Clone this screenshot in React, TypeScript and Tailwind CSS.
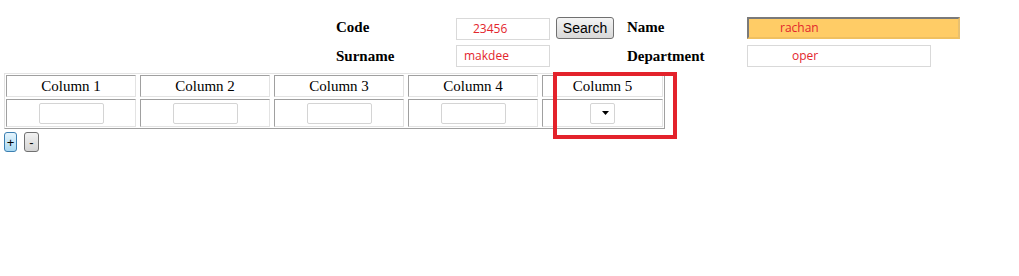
import React from "react";

const columns = ["Column 1", "Column 2", "Column 3", "Column 4"];

const FieldInput = (props: { value: string; className: string }) => {
    const { value, className } = props;

    return (
        <div
            className={`flex h-[22px] items-center border border-[#d9d9d9] text-[12px] text-[#e3262d] ${className}`}
            style={{ fontFamily: '"Open Sans", "Noto Sans", sans-serif' }}
        >
            {value}
        </div>
    );
};

const Label = (props: { text: string; className?: string }) => (
    <div
        className={`flex w-[120px] items-center text-[15px] font-bold text-black ${props.className ?? ""}`}
        style={{ fontFamily: '"Liberation Serif", serif' }}
    >
        {props.text}
    </div>
);

const Cell = (props: { children: React.ReactNode; width: string; height: string }) => (
    <div
        className={`flex items-center justify-center border border-t-[#a0a0a0] border-l-[#a0a0a0] border-r-[#e3e3e3] border-b-[#e3e3e3] ${props.width} ${props.height}`}
    >
        {props.children}
    </div>
);

export default function App() {
    return (
        <div className="relative h-[276px] w-[1019px] bg-white">
            {/* search form */}
            <div className="flex flex-col gap-[6px] pl-[336px] pt-[16px]">
                <div className="flex h-[23px] items-center">
                    <Label text="Code" />
                    <FieldInput value="23456" className="mt-[2px] w-[94px] pl-[16px]" />
                    <button
                        className="ml-[6px] h-[22px] w-[58px] rounded-[3px] border border-[#707070] bg-gradient-to-b from-[#f4f4f4] to-[#d8d8d8] text-[14px] leading-none text-black"
                        style={{ fontFamily: '"Liberation Sans", Arial, sans-serif' }}
                    >
                        Search
                    </button>
                    <Label text="Name" className="ml-[13px]" />
                    <FieldInput
                        value="rachan"
                        className="h-[21px] w-[213px] border-2 border-t-[#7a7a7a] border-l-[#7a7a7a] border-r-[#e8c070] border-b-[#f0c060] bg-[#ffcc66] pl-[31px]"
                    />
                </div>

                <div className="flex h-[22px] items-center">
                    <Label text="Surname" />
                    <FieldInput value="makdee" className="w-[94px] pl-[7px]" />
                    <div className="w-[77px]" />
                    <Label text="Department" />
                    <FieldInput value="oper" className="w-[184px] pl-[44px]" />
                </div>
            </div>

            {/* grid */}
            <div className="ml-[4px] mt-[6px] flex w-fit flex-col gap-[2px] border border-t-[#e3e3e3] border-l-[#e3e3e3] border-r-[#a0a0a0] border-b-[#a0a0a0] p-[1px]">
                <div className="flex gap-[4px]" style={{ fontFamily: '"Liberation Serif", serif' }}>
                    {columns.map((c) => (
                        <Cell key={c} width="w-[130px]" height="h-[22px]">
                            <span className="text-[15px] text-black">{c}</span>
                        </Cell>
                    ))}
                    <Cell width="w-[121px]" height="h-[22px]">
                        <span className="text-[15px] text-black">Column 5</span>
                    </Cell>
                </div>
                <div className="flex gap-[4px]">
                    {columns.map((c) => (
                        <Cell key={c} width="w-[130px]" height="h-[28px]">
                            <div className="h-[21px] w-[65px] rounded-[2px] border border-[#d4d4d4] bg-white" />
                        </Cell>
                    ))}
                    <Cell width="w-[121px]" height="h-[28px]">
                        <div className="flex h-[21px] w-[25px] items-center justify-end rounded-[2px] border border-[#d4d4d4] bg-white pr-[5px]">
                            <svg width="7" height="4" viewBox="0 0 7 4">
                                <path d="M0 0 H7 L3.5 4 Z" fill="#000" />
                            </svg>
                        </div>
                    </Cell>
                </div>
            </div>

            {/* add / remove rows */}
            <div
                className="ml-[4px] mt-[3px] flex gap-[7px] text-[13px] leading-none text-black"
                style={{ fontFamily: '"Liberation Sans", Arial, sans-serif' }}
            >
                <button className="flex h-[20px] w-[13px] items-center justify-center rounded-[3px] border border-[#3c7fb1] bg-gradient-to-b from-[#e5f4fc] to-[#a9d9f2]">
                    +
                </button>
                <button className="flex h-[20px] w-[15px] items-center justify-center rounded-[3px] border border-[#707070] bg-gradient-to-b from-[#f2f2f2] to-[#d4d4d4]">
                    -
                </button>
            </div>

            {/* highlight marker */}
            <div className="absolute left-[553px] top-[72px] h-[67px] w-[124px] border-4 border-[#e3222b]" />
        </div>
    );
}
